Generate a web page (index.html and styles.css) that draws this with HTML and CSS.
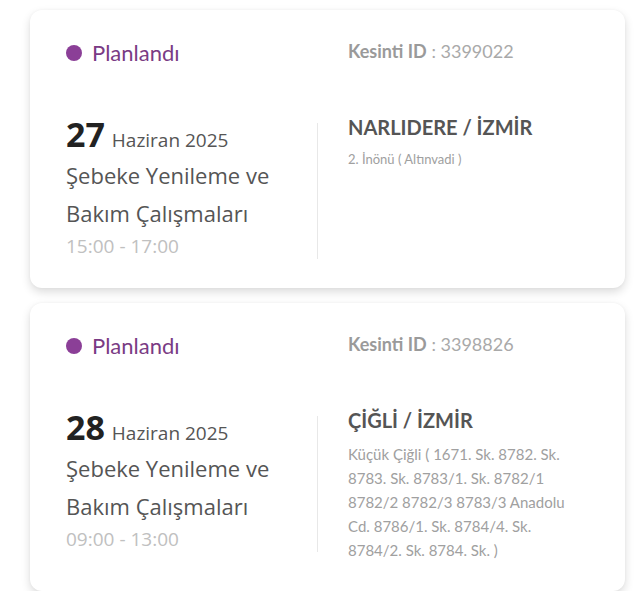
FILE: index.html
```html
<!DOCTYPE html>
<html lang="tr">
<head>
<meta charset="utf-8">
<title>Kesintiler</title>
<link rel="stylesheet" href="styles.css">
</head>
<body>
<div class="list">
  <div class="card">
    <div class="row head">
      <div class="status"><span class="dot"></span><span class="status-text">Planlandı</span></div>
      <div class="outage-id"><b>Kesinti ID</b> : 3399022</div>
    </div>
    <div class="row body">
      <div class="left">
        <div class="date"><span class="day">27</span> Haziran 2025</div>
        <div class="title">Şebeke Yenileme ve Bakım Çalışmaları</div>
        <div class="time">15:00 - 17:00</div>
      </div>
      <div class="right">
        <div class="place">NARLIDERE / İZMİR</div>
        <div class="addr small">2. İnönü ( Altınvadi )</div>
      </div>
    </div>
  </div>
  <div class="card">
    <div class="row head">
      <div class="status"><span class="dot"></span><span class="status-text">Planlandı</span></div>
      <div class="outage-id"><b>Kesinti ID</b> : 3398826</div>
    </div>
    <div class="row body">
      <div class="left">
        <div class="date"><span class="day">28</span> Haziran 2025</div>
        <div class="title">Şebeke Yenileme ve Bakım Çalışmaları</div>
        <div class="time">09:00 - 13:00</div>
      </div>
      <div class="right">
        <div class="place">ÇİĞLİ / İZMİR</div>
        <div class="addr">Küçük Çiğli ( 1671. Sk. 8782. Sk. 8783. Sk. 8783/1. Sk. 8782/1 8782/2 8782/3 8783/3 Anadolu Cd. 8786/1. Sk. 8784/4. Sk. 8784/2. Sk. 8784. Sk. )</div>
      </div>
    </div>
  </div>
</div>
</body>
</html>
```

FILE: styles.css
```css
html, body {
  margin: 0;
  padding: 0;
  background: #ffffff;
}
body {
  font-family: "Open Sans", "Noto Sans", sans-serif;
}
.list {
  display: flex;
  flex-direction: column;
  gap: 15px;
  padding: 10px 15px 0 30px;
}
.card {
  width: 595px;
  box-sizing: border-box;
  background: #ffffff;
  border-radius: 12px;
  box-shadow: 0 4px 10px rgba(0, 0, 0, 0.14), 0 0 3px rgba(0, 0, 0, 0.04);
  padding: 30px 36px 29px 36px;
}
.row {
  display: grid;
  grid-template-columns: 252px 1fr;
  align-items: start;
}
.status {
  display: flex;
  align-items: center;
  gap: 10px;
  height: 26px;
}
.dot {
  width: 16px;
  height: 16px;
  border-radius: 50%;
  background: #8b3f97;
  flex: none;
}
.status-text {
  font-family: Lato, "Noto Sans", sans-serif;
  font-size: 22px;
  line-height: 26px;
  color: #7a3b84;
}
.outage-id {
  font-family: Lato, "Noto Sans", sans-serif;
  font-size: 18px;
  line-height: 22px;
  color: #a9a9a9;
  padding-left: 30px;
}
.outage-id b {
  font-weight: 700;
  color: #9a9a9a;
}
.body {
  margin-top: 50px;
}
.left {
  margin-top: 7px;
  border-right: 1.5px solid #e8e8e8;
  padding-bottom: 1px;
}
.date {
  font-size: 19px;
  line-height: 22px;
  color: #555555;
}
.day {
  font-size: 34px;
  line-height: 22px;
  font-weight: 700;
  color: #222222;
  margin-right: 2px;
}
.title {
  margin-top: 5px;
  font-size: 22px;
  line-height: 38px;
  color: #555555;
  padding-right: 20px;
}
.time {
  margin-top: 2px;
  font-size: 19px;
  line-height: 24px;
  color: #c0c0c0;
}
.right {
  padding-left: 30px;
  padding-right: 10px;
}
.place {
  font-family: Lato, "Noto Sans", sans-serif;
  font-size: 20px;
  line-height: 22px;
  font-weight: 700;
  color: #555555;
}
.addr {
  margin-top: 11px;
  font-family: Lato, "Noto Sans", sans-serif;
  font-size: 15px;
  line-height: 24px;
  color: #a0a0a0;
}
.addr.small {
  font-size: 13px;
  margin-top: 9px;
}
```
